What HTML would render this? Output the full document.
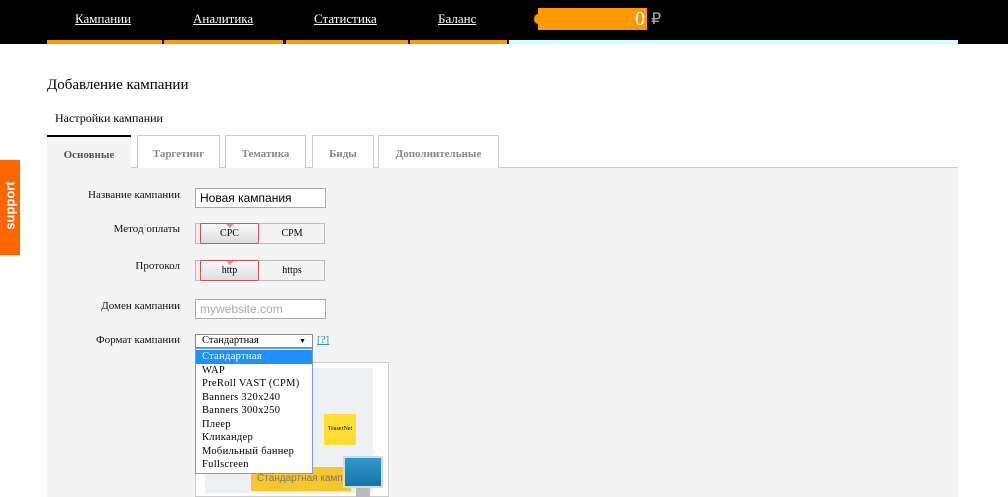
<!DOCTYPE html>
<html><head><meta charset="utf-8"><style>
*{margin:0;padding:0;box-sizing:border-box}
body{width:1008px;height:497px;overflow:hidden;background:#fff;font-family:"Liberation Serif",serif;position:relative}
.a{position:absolute}
.top{left:0;top:0;width:1008px;height:44px;background:#000}
.nav{color:#fff;text-decoration:underline;font-size:13px;top:11px}
.bar{top:40px;height:4px;background:#f90}
.lbl{font-size:11px;color:#111;text-align:right;width:140px;left:40px}
.tab{top:135px;height:33px;border:1px solid #ccc;border-bottom:none;color:#888;font-size:11px;font-weight:bold;text-align:center;line-height:36px;background:#fff}
.inp{left:195px;width:131px;height:20px;border:1px solid #aaa;background:#fff;font-family:"Liberation Sans",sans-serif;font-size:12px;padding:2px 4px}
.tg{left:195px;width:130px;height:21px;border:1px solid #bbb;background:#eee;font-size:10px}
.on{position:absolute;left:4px;top:-1px;width:59px;height:21px;border:1px solid #c55;border-radius:2px;background:linear-gradient(#fafafa,#ddd);text-align:center;line-height:19px}
.on:before{content:"";position:absolute;left:25px;top:0;border:4px solid transparent;border-top-color:#e88}
.off{position:absolute;left:64px;top:0;width:64px;height:19px;text-align:center;line-height:19px;background:#f4f4f4}
.li{font-size:10.5px;line-height:13.5px;padding-left:6px;letter-spacing:.3px;white-space:nowrap}
</style></head><body>
<div class="a top"></div>
<div class="a nav" style="left:75px">Кампании</div>
<div class="a nav" style="left:193px">Аналитика</div>
<div class="a nav" style="left:314px">Статистика</div>
<div class="a nav" style="left:438px">Баланс</div>
<div class="a" style="left:534px;top:14px;width:8px;height:10px;border-radius:50%;background:#f90"></div>
<div class="a" style="left:538px;top:8px;width:109px;height:22px;background:#f90;color:#fff;font-size:20px;text-align:right;padding-right:2px;line-height:22px">0</div>
<div class="a" style="left:651px;top:9px;color:#aaa;font-size:16px">₽</div>
<div class="a bar" style="left:47px;width:115px"></div>
<div class="a bar" style="left:164px;width:119px"></div>
<div class="a bar" style="left:286px;width:122px"></div>
<div class="a bar" style="left:410px;width:97px"></div>
<div class="a bar" style="left:509px;width:449px;background:#cff"></div>
<div class="a" style="left:47px;top:77px;font-size:15px">Добавление кампании</div>
<div class="a" style="left:55px;top:111px;font-size:12px">Настройки кампании</div>
<div class="a" style="left:47px;top:167px;width:911px;height:330px;background:#f4f4f4;border-top:1px solid #ccc"></div>
<div class="a tab" style="left:47px;width:84px;background:#f4f4f4;border:none;border-top:2px solid #000;color:#555;height:34px">Основные</div>
<div class="a tab" style="left:137px;width:83px">Таргетинг</div>
<div class="a tab" style="left:225px;width:81px">Тематика</div>
<div class="a tab" style="left:312px;width:62px">Биды</div>
<div class="a tab" style="left:378px;width:121px">Дополнительные</div>
<div class="a" style="left:0;top:160px;width:20px;height:95px;background:#f60"></div>
<div class="a" style="left:-30px;top:198px;width:80px;color:#fff;font-family:'Liberation Sans',sans-serif;font-size:13px;font-weight:bold;transform:rotate(-90deg);text-align:center">support</div>
<div class="a lbl" style="top:189px">Название кампании</div>
<div class="a inp" style="top:188px">Новая кампания</div>
<div class="a lbl" style="top:223px">Метод оплаты</div>
<div class="a tg" style="top:223px"><div class="on">CPC</div><div class="off">CPM</div></div>
<div class="a lbl" style="top:260px">Протокол</div>
<div class="a tg" style="top:260px"><div class="on">http</div><div class="off">https</div></div>
<div class="a lbl" style="top:300px">Домен кампании</div>
<div class="a inp" style="top:299px;color:#aaa">mywebsite.com</div>
<div class="a lbl" style="top:334px">Формат кампании</div>
<div class="a" style="left:195px;top:334px;width:118px;height:14px;border:1px solid #888;background:#fff;font-size:10.5px;padding-left:6px;line-height:12px">Стандартная<span style="position:absolute;right:6px;font-size:7px">▼</span></div>
<div class="a" style="left:317px;top:334px;font-size:11px;color:#39c;text-decoration:underline">[?]</div>
<div class="a" style="left:195px;top:362px;width:194px;height:135px;border:1px solid #ccc;background:#fff"></div>
<div class="a" style="left:205px;top:368px;width:168px;height:125px;background:#eef0f3"></div>
<div class="a" style="left:251px;top:467px;width:100px;height:24px;background:#f7c62c;color:#776;font-family:'Liberation Sans',sans-serif;font-size:10px;line-height:24px;padding-left:6px;white-space:nowrap;overflow:hidden">Стандартная кампания</div>
<div class="a" style="left:324px;top:414px;width:32px;height:31px;background:#fd3;font-size:6px;text-align:center;line-height:31px">TeaserNet</div>
<div class="a" style="left:343px;top:456px;width:40px;height:32px;background:linear-gradient(#39c,#17a);border:2px solid #cde"></div>
<div class="a" style="left:356px;top:488px;width:14px;height:9px;background:#bbb"></div>
<div class="a" style="left:195px;top:348px;width:118px;height:126px;border:1px solid #7a9cd3;background:#fff;padding-top:1px">
<div class="li" style="background:#1e90ff;color:#fff">Стандартная</div>
<div class="li">WAP</div><div class="li">PreRoll VAST (CPM)</div><div class="li">Banners 320x240</div><div class="li">Banners 300x250</div><div class="li">Плеер</div><div class="li">Кликандер</div><div class="li">Мобильный баннер</div><div class="li">Fullscreen</div>
</div>
</body></html>
